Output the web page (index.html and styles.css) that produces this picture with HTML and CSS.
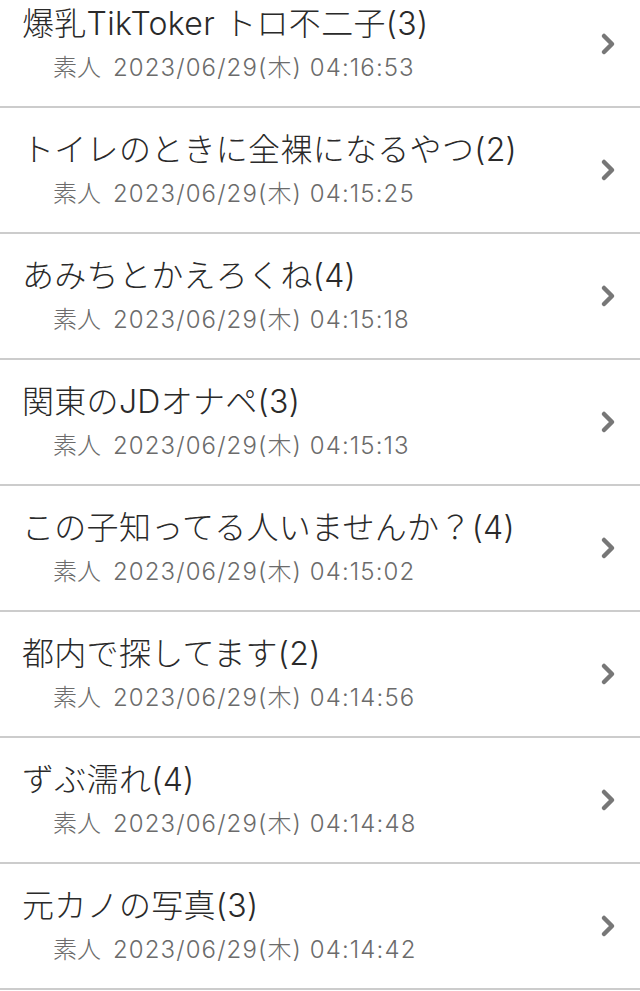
FILE: index.html
```html
<!DOCTYPE html>
<html lang="ja">
<head>
<meta charset="utf-8">
<title>スレッド一覧</title>
<link rel="stylesheet" href="styles.css">
</head>
<body>
<ul class="thread-list">
  <li class="thread"><a class="thread-link" href="#"><div class="thread-body"><div class="thread-title">爆乳TikToker トロ不二子(3)</div><div class="thread-meta"><span class="cat">素人</span><span class="date">2023/06/29(木) 04:16:53</span></div></div><svg class="chev" viewBox="0 0 20 26" width="20" height="26"><polyline points="6,5 14,13 6,21"/></svg></a></li>
  <li class="thread"><a class="thread-link" href="#"><div class="thread-body"><div class="thread-title">トイレのときに全裸になるやつ(2)</div><div class="thread-meta"><span class="cat">素人</span><span class="date">2023/06/29(木) 04:15:25</span></div></div><svg class="chev" viewBox="0 0 20 26" width="20" height="26"><polyline points="6,5 14,13 6,21"/></svg></a></li>
  <li class="thread"><a class="thread-link" href="#"><div class="thread-body"><div class="thread-title">あみちとかえろくね(4)</div><div class="thread-meta"><span class="cat">素人</span><span class="date">2023/06/29(木) 04:15:18</span></div></div><svg class="chev" viewBox="0 0 20 26" width="20" height="26"><polyline points="6,5 14,13 6,21"/></svg></a></li>
  <li class="thread"><a class="thread-link" href="#"><div class="thread-body"><div class="thread-title">関東のJDオナペ(3)</div><div class="thread-meta"><span class="cat">素人</span><span class="date">2023/06/29(木) 04:15:13</span></div></div><svg class="chev" viewBox="0 0 20 26" width="20" height="26"><polyline points="6,5 14,13 6,21"/></svg></a></li>
  <li class="thread"><a class="thread-link" href="#"><div class="thread-body"><div class="thread-title">この子知ってる人いませんか？(4)</div><div class="thread-meta"><span class="cat">素人</span><span class="date">2023/06/29(木) 04:15:02</span></div></div><svg class="chev" viewBox="0 0 20 26" width="20" height="26"><polyline points="6,5 14,13 6,21"/></svg></a></li>
  <li class="thread"><a class="thread-link" href="#"><div class="thread-body"><div class="thread-title">都内で探してます(2)</div><div class="thread-meta"><span class="cat">素人</span><span class="date">2023/06/29(木) 04:14:56</span></div></div><svg class="chev" viewBox="0 0 20 26" width="20" height="26"><polyline points="6,5 14,13 6,21"/></svg></a></li>
  <li class="thread"><a class="thread-link" href="#"><div class="thread-body"><div class="thread-title">ずぶ濡れ(4)</div><div class="thread-meta"><span class="cat">素人</span><span class="date">2023/06/29(木) 04:14:48</span></div></div><svg class="chev" viewBox="0 0 20 26" width="20" height="26"><polyline points="6,5 14,13 6,21"/></svg></a></li>
  <li class="thread"><a class="thread-link" href="#"><div class="thread-body"><div class="thread-title">元カノの写真(3)</div><div class="thread-meta"><span class="cat">素人</span><span class="date">2023/06/29(木) 04:14:42</span></div></div><svg class="chev" viewBox="0 0 20 26" width="20" height="26"><polyline points="6,5 14,13 6,21"/></svg></a></li>
</ul>
</body>
</html>
```

FILE: styles.css
```css
html, body {
  margin: 0;
  padding: 0;
  background: #ffffff;
}
body {
  font-family: Inter, "Noto Sans CJK JP", sans-serif;
  font-weight: 300;
  overflow: hidden;
}
.thread-list {
  list-style: none;
  margin: -18px 0 0 0;
  padding: 0;
}
.thread {
  border-bottom: 2px solid #cccccc;
}
.thread-link {
  display: flex;
  align-items: center;
  height: 124px;
  box-sizing: border-box;
  padding: 0 22px 0 22px;
  text-decoration: none;
  color: inherit;
}
.thread-body {
  flex: 1;
  min-width: 0;
}
.thread-title {
  font-size: 32px;
  line-height: 40px;
  color: #2a2a2a;
  letter-spacing: 0.3px;
  white-space: nowrap;
}
.thread-meta {
  margin-top: 8px;
  padding-left: 31px;
  font-size: 24px;
  line-height: 32px;
  color: #6b6b6b;
  white-space: nowrap;
}
.cat {
  margin-right: 12px;
}
.date {
  letter-spacing: 1.1px;
}
.chev {
  flex: none;
  fill: none;
  stroke: #777777;
  stroke-width: 4.5;
  stroke-linecap: round;
  stroke-linejoin: round;
}
```
